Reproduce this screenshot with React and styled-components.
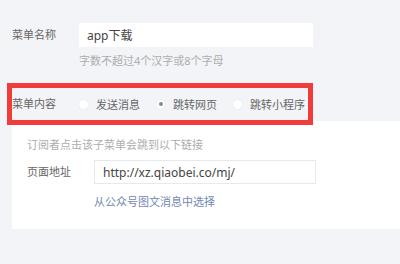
import React from 'react'
import styled, { createGlobalStyle } from 'styled-components'

const GlobalStyle = createGlobalStyle`
  html, body {
    margin: 0;
    padding: 0;
    background: #f3f4f7;
    font-family: "Noto Sans", "Noto Sans CJK SC", sans-serif;
  }
`;

const Page = styled.div`
  width: 400px;
  height: 264px;
  overflow: hidden;
  padding: 23px 0 0 12px;
  box-sizing: border-box;
`;

const FieldRow = styled.div`
  display: flex;
  align-items: center;
  margin-top: ${p => p.$top || 0}px;
`;

const Label = styled.div`
  width: ${p => p.$width || 67}px;
  flex-shrink: 0;
  font-size: 11px;
  color: #666;
  line-height: 16px;
  white-space: nowrap;
`;

const TextBox = styled.div`
  width: ${p => p.$width}px;
  height: 24px;
  box-sizing: border-box;
  background: #fff;
  border: 1px solid ${p => (p.$bordered ? '#e8e9ec' : '#fff')};
  padding-left: ${p => p.$pad || 7}px;
  display: flex;
  align-items: center;
  font-size: 12px;
  color: #444;
`;

const Hint = styled.div`
  margin: ${p => p.$top || 0}px 0 0 ${p => p.$left || 0}px;
  font-size: 11px;
  line-height: 16px;
  color: #adadad;
  white-space: nowrap;
`;

const Highlight = styled.div`
  position: relative;
  z-index: 1;
  margin: 14px 0 0 -5px;
  width: 306px;
  height: 42px;
  box-sizing: border-box;
  border: 5px solid #f23b3b;
  display: flex;
  align-items: center;
`;

const RadioGroup = styled.div`
  display: flex;
  align-items: center;
  flex-shrink: 0;
`;

const Option = styled.label`
  display: flex;
  align-items: center;
  gap: 7px;
  margin-right: 15px;
  font-size: 11px;
  color: #666;
  white-space: nowrap;
  flex-shrink: 0;
`;

const Dot = styled.span`
  width: 11px;
  height: 11px;
  flex-shrink: 0;
  box-sizing: border-box;
  border-radius: 50%;
  background: #fff;
  border: 1px solid #eceef1;
  display: flex;
  align-items: center;
  justify-content: center;
  &::after {
    content: '';
    width: 4px;
    height: 4px;
    border-radius: 50%;
    background: ${p => (p.$on ? '#8a8a8a' : 'transparent')};
  }
`;

const Panel = styled.div`
  margin-top: -4px;
  background: #fff;
  padding: 16px 0 19px 15px;
`;

const LinkText = styled.a`
  display: block;
  margin: 10px 0 0 67px;
  font-size: 11px;
  line-height: 16px;
  color: #7388b0;
  text-decoration: none;
`;

const options = [
  { text: '发送消息', on: false },
  { text: '跳转网页', on: true },
  { text: '跳转小程序', on: false },
];

export default function App() {
  return (
    <Page>
      <GlobalStyle />
      <FieldRow>
        <Label>菜单名称</Label>
        <TextBox $width={234}>app下载</TextBox>
      </FieldRow>
      <Hint $top={6} $left={67}>字数不超过4个汉字或8个字母</Hint>

      <Highlight>
        <Label $width={66}>菜单内容</Label>
        <RadioGroup>
          {options.map(o => (
            <Option key={o.text}>
              <Dot $on={o.on} />
              {o.text}
            </Option>
          ))}
        </RadioGroup>
      </Highlight>

      <Panel>
        <Hint>订阅者点击该子菜单会跳到以下链接</Hint>
        <FieldRow $top={7}>
          <Label>页面地址</Label>
          <TextBox $width={222} $bordered $pad={8}>http://xz.qiaobei.co/mj/</TextBox>
        </FieldRow>
        <LinkText href="#">从公众号图文消息中选择</LinkText>
      </Panel>
    </Page>
  )
}
